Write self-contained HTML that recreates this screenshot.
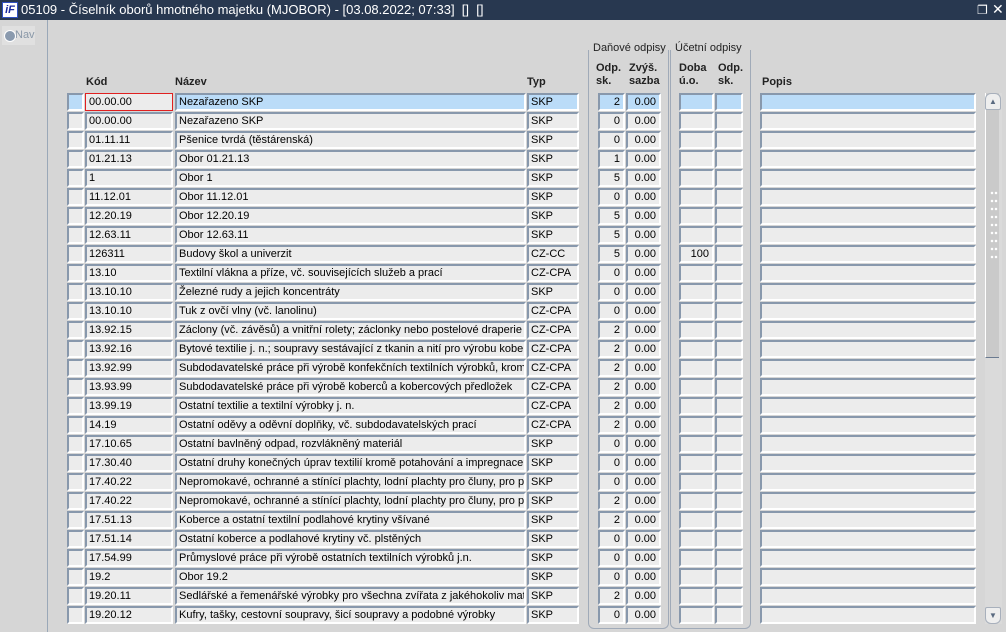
<!DOCTYPE html>
<html><head><meta charset="utf-8">
<style>
*{margin:0;padding:0;box-sizing:border-box}
body{width:1006px;height:632px;overflow:hidden;background:#d6d6d6;font-family:"Liberation Sans",Tahoma,sans-serif;font-size:11px;color:#000;position:relative}
.tb{position:absolute;left:0;top:0;width:1006px;height:20px;background:#283850;color:#fff;font-size:13px;line-height:20px}
.logo{position:absolute;left:2px;top:2px;width:16px;height:16px;background:#fff;border:1px solid #3050c0;color:#1a2aa0;font:bold italic 11px "Liberation Sans",sans-serif;line-height:14px;text-align:center}
.lp{position:absolute;left:0;top:20px;width:48px;height:612px;border-right:1px solid #9aa8b8}
.nav{position:absolute;left:2px;top:6px;width:33px;height:19px;background:#e0e0e0;color:#8a98a8;font-size:11px;line-height:19px;padding-left:13px}
.nav:before{content:"";position:absolute;left:2px;top:4px;width:10px;height:10px;border-radius:50%;background:#8a9aae;border:1px solid #fff}
.h{position:absolute;font-weight:bold;font-size:11px;line-height:13px;color:#222}
.g{position:absolute;border:1px solid #a0aab8;border-top:none;border-radius:0 0 6px 6px}
.gl{position:absolute;font-size:11px;color:#222;background:#d6d6d6;padding:0 2px}
.r{position:absolute;left:0;width:1006px;height:19px}
.f{position:absolute;top:0;height:18px;background:#ececec;border-top:2px solid #8898ac;border-left:2px solid #8898ac;border-right:2px solid #fff;border-bottom:2px solid #fff;line-height:15px;padding-left:2px;white-space:nowrap;overflow:hidden}
.n{text-align:right;padding-right:3px;padding-left:0}
.s .f{background:#bbdcf8}
.a{left:67px;width:17px}.b{left:85px;width:88px}.c{left:175px;width:351px}.d{left:527px;width:52px}
.e{left:598px;width:27px}.z{left:626px;width:35px}.o{left:679px;width:35px}.p{left:715px;width:28px}.q{left:760px;width:216px}
.sb{position:absolute;left:985px;top:93px;width:17px;height:531px;background:#dadada}
.sb .th{position:absolute;left:0;top:0;width:14px;height:265px;background:#cacaca;border-left:1px solid #fff;border-bottom:1px solid #6a7a90}
.dots{position:absolute;left:4px;top:96px;width:8px;height:70px;background-image:radial-gradient(circle,#fff 1px,transparent 1.5px);background-size:4px 8px}
.btn{position:absolute;left:0;width:16px;height:17px;border:1px solid #a8b0bc;border-radius:6px 6px 2px 2px;background:#eee;color:#5a6a80;font-size:8px;text-align:center;line-height:15px}
</style></head><body>
<div class="tb"><div class="logo">iF</div><span style="position:absolute;left:21px">05109 - Číselník oborů hmotného majetku (MJOBOR) - [03.08.2022; 07:33]&nbsp; [] &nbsp;[]</span>
<span style="position:absolute;left:977px;top:0;font-size:12px">&#x2750;</span><span style="position:absolute;left:992px;top:-1px;font-size:14px">✕</span></div>
<div class="lp"><div class="nav">Nav</div></div>

<div class="g" style="left:588px;top:50px;width:81px;height:579px"></div>
<div class="g" style="left:670px;top:50px;width:81px;height:579px"></div>
<div class="gl" style="left:591px;top:42px">Daňové odpisy</div>
<div class="gl" style="left:673px;top:42px">Účetní odpisy</div>

<div class="h" style="left:86px;top:76px">Kód</div>
<div class="h" style="left:175px;top:76px">Název</div>
<div class="h" style="left:527px;top:76px">Typ</div>
<div class="h" style="left:596px;top:62px">Odp.<br>sk.</div>
<div class="h" style="left:629px;top:62px">Zvýš.<br>sazba</div>
<div class="h" style="left:679px;top:62px">Doba<br>ú.o.</div>
<div class="h" style="left:718px;top:62px">Odp.<br>sk.</div>
<div class="h" style="left:762px;top:76px">Popis</div>

<div class="r s" style="top:93px"><div class="f a"></div><div class="f b" style="border:1px solid #e02020;background:#ececec;padding-left:3px;line-height:17px">00.00.00</div><div class="f c">Nezařazeno SKP</div><div class="f d">SKP</div><div class="f e n">2</div><div class="f z n">0.00</div><div class="f o n"></div><div class="f p"></div><div class="f q"></div></div>
<div class="r" style="top:112px"><div class="f a"></div><div class="f b">00.00.00</div><div class="f c">Nezařazeno SKP</div><div class="f d">SKP</div><div class="f e n">0</div><div class="f z n">0.00</div><div class="f o n"></div><div class="f p"></div><div class="f q"></div></div>
<div class="r" style="top:131px"><div class="f a"></div><div class="f b">01.11.11</div><div class="f c">Pšenice tvrdá (těstárenská)</div><div class="f d">SKP</div><div class="f e n">0</div><div class="f z n">0.00</div><div class="f o n"></div><div class="f p"></div><div class="f q"></div></div>
<div class="r" style="top:150px"><div class="f a"></div><div class="f b">01.21.13</div><div class="f c">Obor 01.21.13</div><div class="f d">SKP</div><div class="f e n">1</div><div class="f z n">0.00</div><div class="f o n"></div><div class="f p"></div><div class="f q"></div></div>
<div class="r" style="top:169px"><div class="f a"></div><div class="f b">1</div><div class="f c">Obor 1</div><div class="f d">SKP</div><div class="f e n">5</div><div class="f z n">0.00</div><div class="f o n"></div><div class="f p"></div><div class="f q"></div></div>
<div class="r" style="top:188px"><div class="f a"></div><div class="f b">11.12.01</div><div class="f c">Obor 11.12.01</div><div class="f d">SKP</div><div class="f e n">0</div><div class="f z n">0.00</div><div class="f o n"></div><div class="f p"></div><div class="f q"></div></div>
<div class="r" style="top:207px"><div class="f a"></div><div class="f b">12.20.19</div><div class="f c">Obor 12.20.19</div><div class="f d">SKP</div><div class="f e n">5</div><div class="f z n">0.00</div><div class="f o n"></div><div class="f p"></div><div class="f q"></div></div>
<div class="r" style="top:226px"><div class="f a"></div><div class="f b">12.63.11</div><div class="f c">Obor 12.63.11</div><div class="f d">SKP</div><div class="f e n">5</div><div class="f z n">0.00</div><div class="f o n"></div><div class="f p"></div><div class="f q"></div></div>
<div class="r" style="top:245px"><div class="f a"></div><div class="f b">126311</div><div class="f c">Budovy škol a univerzit</div><div class="f d">CZ-CC</div><div class="f e n">5</div><div class="f z n">0.00</div><div class="f o n">100</div><div class="f p"></div><div class="f q"></div></div>
<div class="r" style="top:264px"><div class="f a"></div><div class="f b">13.10</div><div class="f c">Textilní vlákna a příze, vč. souvisejících služeb a prací</div><div class="f d">CZ-CPA</div><div class="f e n">0</div><div class="f z n">0.00</div><div class="f o n"></div><div class="f p"></div><div class="f q"></div></div>
<div class="r" style="top:283px"><div class="f a"></div><div class="f b">13.10.10</div><div class="f c">Železné rudy a jejich koncentráty</div><div class="f d">SKP</div><div class="f e n">0</div><div class="f z n">0.00</div><div class="f o n"></div><div class="f p"></div><div class="f q"></div></div>
<div class="r" style="top:302px"><div class="f a"></div><div class="f b">13.10.10</div><div class="f c">Tuk z ovčí vlny (vč. lanolinu)</div><div class="f d">CZ-CPA</div><div class="f e n">0</div><div class="f z n">0.00</div><div class="f o n"></div><div class="f p"></div><div class="f q"></div></div>
<div class="r" style="top:321px"><div class="f a"></div><div class="f b">13.92.15</div><div class="f c">Záclony (vč. závěsů) a vnitřní rolety; záclonky nebo postelové draperie</div><div class="f d">CZ-CPA</div><div class="f e n">2</div><div class="f z n">0.00</div><div class="f o n"></div><div class="f p"></div><div class="f q"></div></div>
<div class="r" style="top:340px"><div class="f a"></div><div class="f b">13.92.16</div><div class="f c">Bytové textilie j. n.; soupravy sestávající z tkanin a nití pro výrobu koberců</div><div class="f d">CZ-CPA</div><div class="f e n">2</div><div class="f z n">0.00</div><div class="f o n"></div><div class="f p"></div><div class="f q"></div></div>
<div class="r" style="top:359px"><div class="f a"></div><div class="f b">13.92.99</div><div class="f c">Subdodavatelské práce při výrobě konfekčních textilních výrobků, kromě</div><div class="f d">CZ-CPA</div><div class="f e n">2</div><div class="f z n">0.00</div><div class="f o n"></div><div class="f p"></div><div class="f q"></div></div>
<div class="r" style="top:378px"><div class="f a"></div><div class="f b">13.93.99</div><div class="f c">Subdodavatelské práce při výrobě koberců a kobercových předložek</div><div class="f d">CZ-CPA</div><div class="f e n">2</div><div class="f z n">0.00</div><div class="f o n"></div><div class="f p"></div><div class="f q"></div></div>
<div class="r" style="top:397px"><div class="f a"></div><div class="f b">13.99.19</div><div class="f c">Ostatní textilie a textilní výrobky j. n.</div><div class="f d">CZ-CPA</div><div class="f e n">2</div><div class="f z n">0.00</div><div class="f o n"></div><div class="f p"></div><div class="f q"></div></div>
<div class="r" style="top:416px"><div class="f a"></div><div class="f b">14.19</div><div class="f c">Ostatní oděvy a oděvní doplňky, vč. subdodavatelských prací</div><div class="f d">CZ-CPA</div><div class="f e n">2</div><div class="f z n">0.00</div><div class="f o n"></div><div class="f p"></div><div class="f q"></div></div>
<div class="r" style="top:435px"><div class="f a"></div><div class="f b">17.10.65</div><div class="f c">Ostatní bavlněný odpad, rozvlákněný materiál</div><div class="f d">SKP</div><div class="f e n">0</div><div class="f z n">0.00</div><div class="f o n"></div><div class="f p"></div><div class="f q"></div></div>
<div class="r" style="top:454px"><div class="f a"></div><div class="f b">17.30.40</div><div class="f c">Ostatní druhy konečných úprav textilií kromě potahování a impregnace</div><div class="f d">SKP</div><div class="f e n">0</div><div class="f z n">0.00</div><div class="f o n"></div><div class="f p"></div><div class="f q"></div></div>
<div class="r" style="top:473px"><div class="f a"></div><div class="f b">17.40.22</div><div class="f c">Nepromokavé, ochranné a stínící plachty, lodní plachty pro čluny, pro prkna</div><div class="f d">SKP</div><div class="f e n">0</div><div class="f z n">0.00</div><div class="f o n"></div><div class="f p"></div><div class="f q"></div></div>
<div class="r" style="top:492px"><div class="f a"></div><div class="f b">17.40.22</div><div class="f c">Nepromokavé, ochranné a stínící plachty, lodní plachty pro čluny, pro prkna</div><div class="f d">SKP</div><div class="f e n">2</div><div class="f z n">0.00</div><div class="f o n"></div><div class="f p"></div><div class="f q"></div></div>
<div class="r" style="top:511px"><div class="f a"></div><div class="f b">17.51.13</div><div class="f c">Koberce a ostatní textilní podlahové krytiny všívané</div><div class="f d">SKP</div><div class="f e n">2</div><div class="f z n">0.00</div><div class="f o n"></div><div class="f p"></div><div class="f q"></div></div>
<div class="r" style="top:530px"><div class="f a"></div><div class="f b">17.51.14</div><div class="f c">Ostatní koberce a podlahové krytiny vč. plstěných</div><div class="f d">SKP</div><div class="f e n">0</div><div class="f z n">0.00</div><div class="f o n"></div><div class="f p"></div><div class="f q"></div></div>
<div class="r" style="top:549px"><div class="f a"></div><div class="f b">17.54.99</div><div class="f c">Průmyslové práce při výrobě ostatních textilních výrobků j.n.</div><div class="f d">SKP</div><div class="f e n">0</div><div class="f z n">0.00</div><div class="f o n"></div><div class="f p"></div><div class="f q"></div></div>
<div class="r" style="top:568px"><div class="f a"></div><div class="f b">19.2</div><div class="f c">Obor 19.2</div><div class="f d">SKP</div><div class="f e n">0</div><div class="f z n">0.00</div><div class="f o n"></div><div class="f p"></div><div class="f q"></div></div>
<div class="r" style="top:587px"><div class="f a"></div><div class="f b">19.20.11</div><div class="f c">Sedlářské a řemenářské výrobky pro všechna zvířata z jakéhokoliv materiálu</div><div class="f d">SKP</div><div class="f e n">2</div><div class="f z n">0.00</div><div class="f o n"></div><div class="f p"></div><div class="f q"></div></div>
<div class="r" style="top:606px"><div class="f a"></div><div class="f b">19.20.12</div><div class="f c">Kufry, tašky, cestovní soupravy, šicí soupravy a podobné výrobky</div><div class="f d">SKP</div><div class="f e n">0</div><div class="f z n">0.00</div><div class="f o n"></div><div class="f p"></div><div class="f q"></div></div>

<div class="sb"><div class="th"><div class="dots"></div></div><div class="btn" style="top:0">▲</div><div class="btn" style="top:514px;border-radius:2px 2px 6px 6px">▼</div></div>
</body></html>
